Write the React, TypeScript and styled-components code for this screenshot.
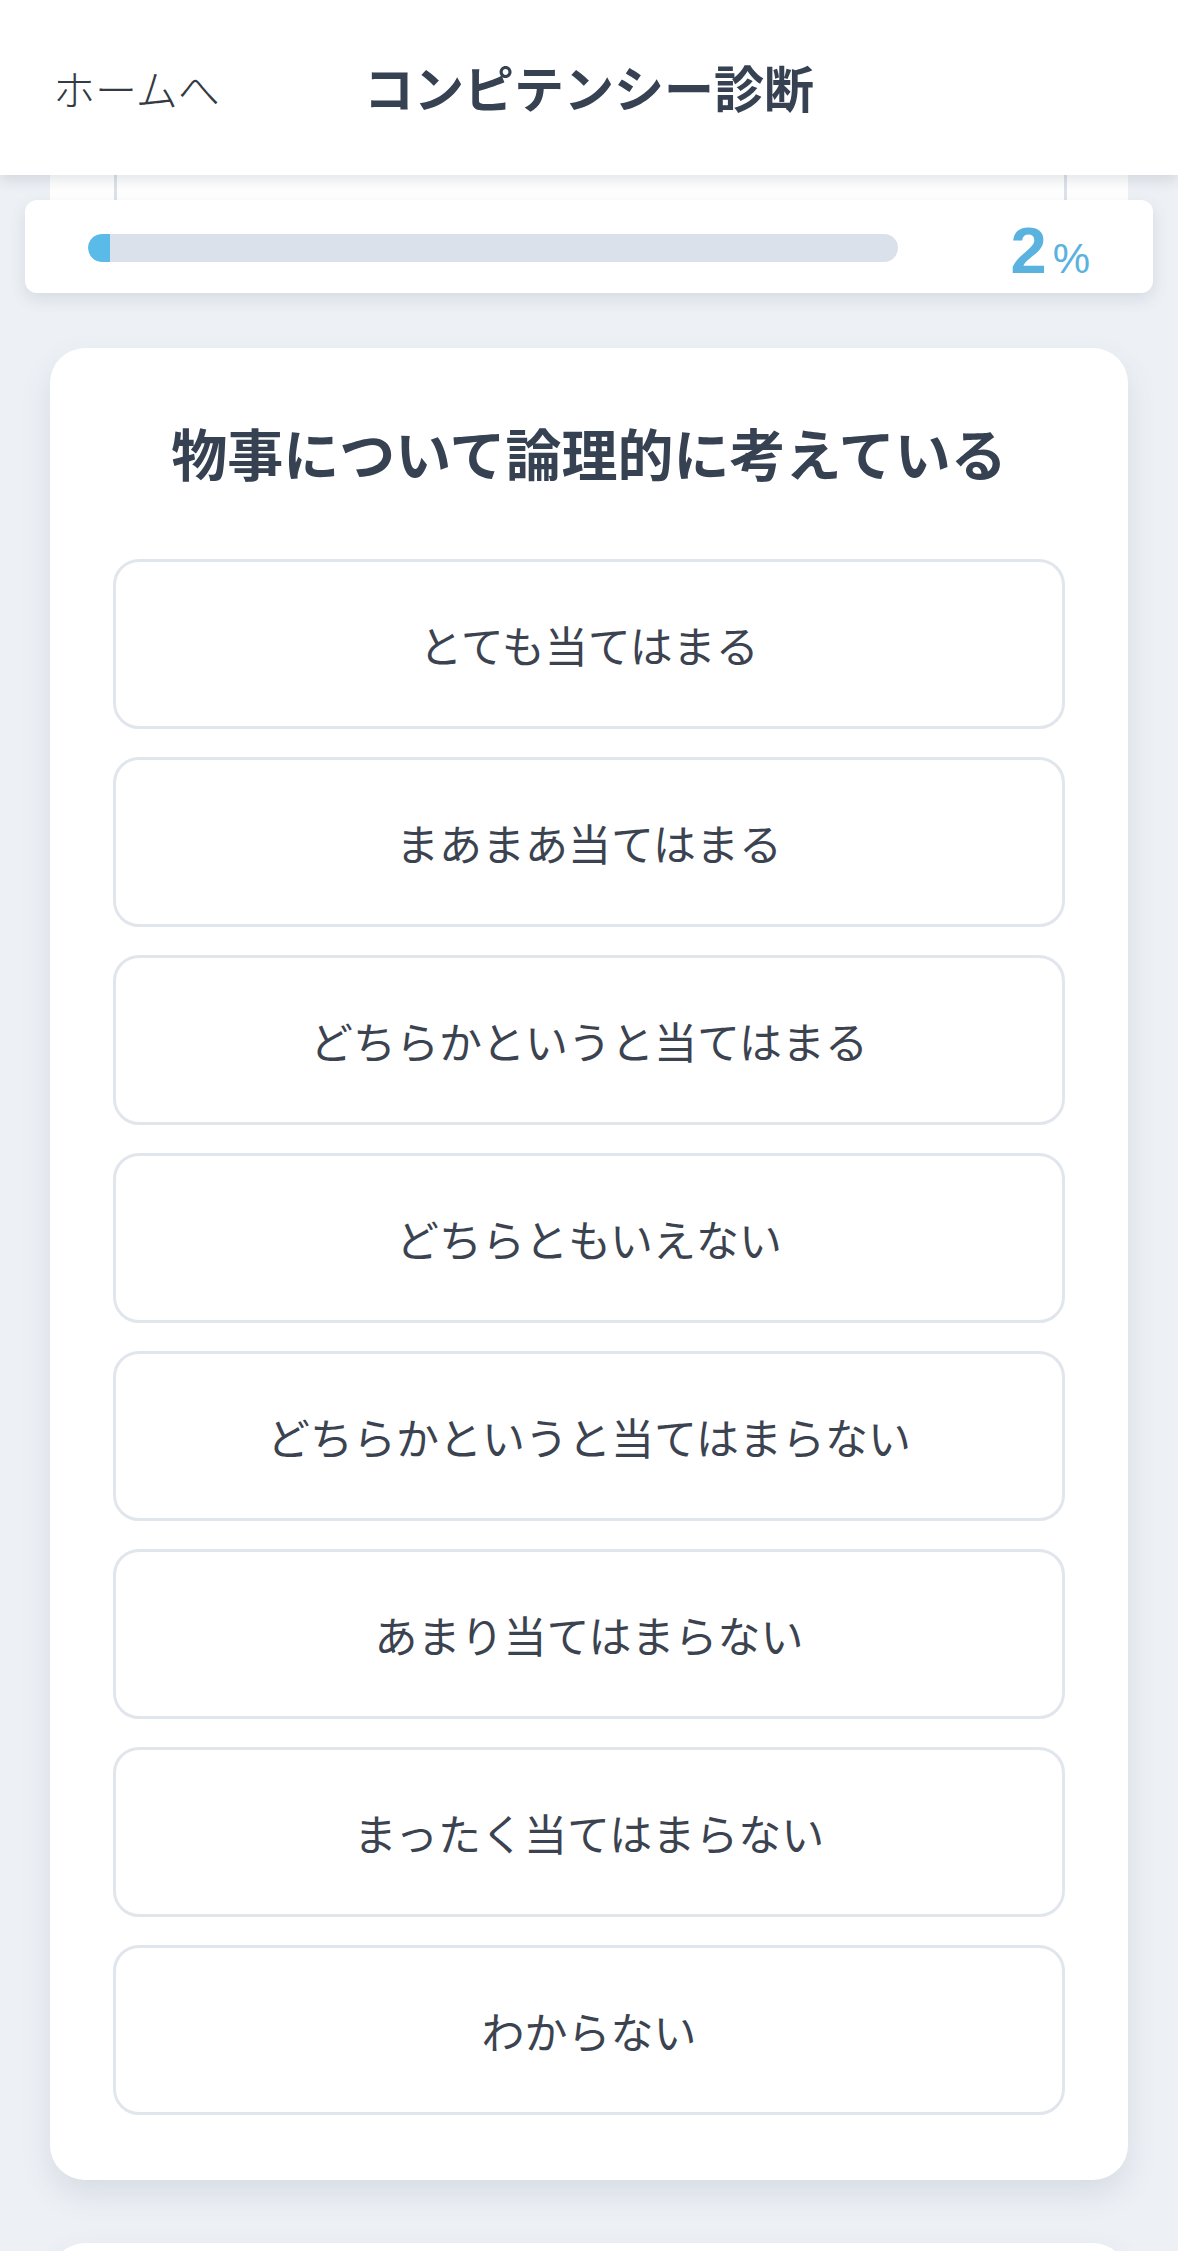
import React from "react";
import styled, { createGlobalStyle } from "styled-components";

const GlobalStyle = createGlobalStyle`
    html, body {
        margin: 0;
        padding: 0;
        background: #edf1f6;
    }
    body {
        font-family: "Noto Sans CJK JP", "Noto Sans", sans-serif;
        color: #364152;
    }
`;

const Header = styled.header`
    position: relative;
    z-index: 3;
    height: 175px;
    background: #ffffff;
    box-shadow: 0 4px 14px rgba(30, 41, 59, 0.14);
    display: grid;
    grid-template-columns: 1fr auto 1fr;
    align-items: center;
`;

const BackLink = styled.a`
    margin-left: 53px;
    font-size: 42px;
    font-weight: 300;
    color: #333a44;
    text-decoration: none;
    justify-self: start;
`;

const HeaderTitle = styled.h1`
    margin: 0 0 4px;
    font-size: 50px;
    font-weight: 700;
    color: #364152;
`;

const Main = styled.main`
    padding: 0 25px;
`;

const PrevCardTail = styled.div`
    height: 25px;
    margin: 0 25px;
    background: #ffffff;
    padding: 0 61px 0 64px;
`;

const OptionSlice = styled.div`
    height: 100%;
    border-left: 3px solid #dde3ea;
    border-right: 3px solid #dde3ea;
`;

const ProgressCard = styled.div`
    position: relative;
    z-index: 2;
    height: 93px;
    background: #ffffff;
    border-radius: 12px;
    box-shadow: 0 6px 16px rgba(71, 85, 105, 0.14);
    display: flex;
    align-items: center;
    gap: 112px;
    padding: 0 63px;
`;

const Track = styled.div`
    flex: 1;
    height: 28px;
    margin-top: 3px;
    border-radius: 14px;
    background: #dae1ea;
    overflow: hidden;
`;

const Fill = styled.div`
    height: 100%;
    background: #5bbbe8;
    border-radius: 14px 0 0 14px;
`;

const Percent = styled.div`
    display: flex;
    align-items: baseline;
    gap: 6px;
    color: #5ab3de;
    font-family: "Liberation Sans", Arial, sans-serif;
    line-height: 1;
    margin-top: 8px;
`;

const PercentValue = styled.span`
    font-size: 65px;
    font-weight: 700;
`;

const PercentUnit = styled.span`
    font-size: 42px;
    font-weight: 400;
`;

const QuestionCard = styled.section<{ $minHeight?: number }>`
    margin: 55px 50px 0;
    background: #ffffff;
    border-radius: 35px;
    box-shadow: 0 14px 30px rgba(71, 85, 105, 0.13);
    padding: 65px 63px 65px;
    min-height: ${(p) => (p.$minHeight ? `${p.$minHeight}px` : "auto")};
    & + & {
        margin-top: 63px;
    }
`;

const QuestionTitle = styled.h2`
    margin: 0 0 68px;
    text-align: center;
    font-size: 56px;
    line-height: 78px;
    font-weight: 700;
    color: #364152;
`;

const OptionList = styled.div`
    display: flex;
    flex-direction: column;
    gap: 28px;
`;

const OptionButton = styled.button`
    height: 170px;
    width: 100%;
    background: #ffffff;
    border: 3px solid #e1e6ed;
    border-radius: 26px;
    font-family: "Noto Sans CJK JP", "Noto Sans", sans-serif;
    font-size: 43px;
    color: #3c4350;
    cursor: pointer;
`;

const options = [
    "とても当てはまる",
    "まあまあ当てはまる",
    "どちらかというと当てはまる",
    "どちらともいえない",
    "どちらかというと当てはまらない",
    "あまり当てはまらない",
    "まったく当てはまらない",
    "わからない",
];

const App: React.FC = () => {
    const progress = 2;

    return (
        <>
            <GlobalStyle />
            <Header>
                <BackLink href="#">ホームへ</BackLink>
                <HeaderTitle>コンピテンシー診断</HeaderTitle>
            </Header>

            <Main>
                <PrevCardTail>
                    <OptionSlice />
                </PrevCardTail>

                <ProgressCard>
                    <Track>
                        <Fill style={{ width: `${Math.max(progress, 2.7)}%` }} />
                    </Track>
                    <Percent>
                        <PercentValue>{progress}</PercentValue>
                        <PercentUnit>%</PercentUnit>
                    </Percent>
                </ProgressCard>
            </Main>

            <QuestionCard>
                <QuestionTitle>物事について論理的に考えている</QuestionTitle>
                <OptionList>
                    {options.map((label) => (
                        <OptionButton key={label}>{label}</OptionButton>
                    ))}
                </OptionList>
            </QuestionCard>

            <QuestionCard $minHeight={400} />
        </>
    );
};

export default App;
